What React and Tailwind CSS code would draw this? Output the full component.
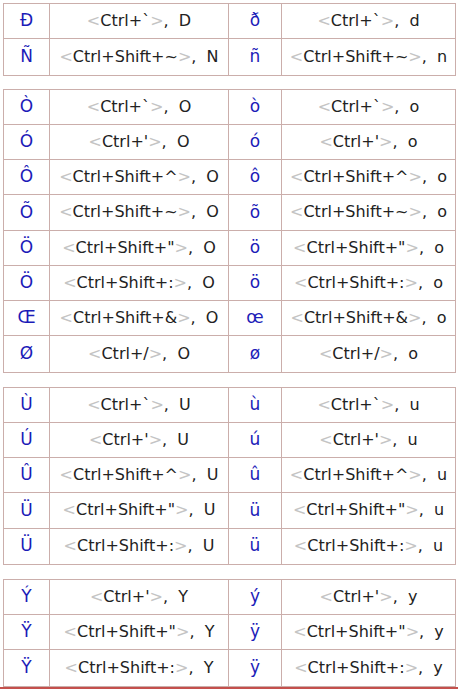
import React from 'react'

const groups = [
	[
		['Đ', '`', 'D', 'ð', '`', 'd'],
		['Ñ', 'Shift+~', 'N', 'ñ', 'Shift+~', 'n'],
	],
	[
		['Ò', '`', 'O', 'ò', '`', 'o'],
		['Ó', "'", 'O', 'ó', "'", 'o'],
		['Ô', 'Shift+^', 'O', 'ô', 'Shift+^', 'o'],
		['Õ', 'Shift+~', 'O', 'õ', 'Shift+~', 'o'],
		['Ö', 'Shift+"', 'O', 'ö', 'Shift+"', 'o'],
		['Ö', 'Shift+:', 'O', 'ö', 'Shift+:', 'o'],
		['Œ', 'Shift+&', 'O', 'œ', 'Shift+&', 'o'],
		['Ø', '/', 'O', 'ø', '/', 'o'],
	],
	[
		['Ù', '`', 'U', 'ù', '`', 'u'],
		['Ú', "'", 'U', 'ú', "'", 'u'],
		['Û', 'Shift+^', 'U', 'û', 'Shift+^', 'u'],
		['Ü', 'Shift+"', 'U', 'ü', 'Shift+"', 'u'],
		['Ü', 'Shift+:', 'U', 'ü', 'Shift+:', 'u'],
	],
	[
		['Ý', "'", 'Y', 'ý', "'", 'y'],
		['Ÿ', 'Shift+"', 'Y', 'ÿ', 'Shift+"', 'y'],
		['Ÿ', 'Shift+:', 'Y', 'ÿ', 'Shift+:', 'y'],
	],
]

const Keys = ({ combo, letter }) => (
	<span className="whitespace-pre">
		<span className="text-[#c4c4c4]">&lt;</span>
		Ctrl+{combo}
		<span className="text-[#c4c4c4]">&gt;</span>,{'  '}
		{letter}
	</span>
)

const Row = ({ row, last }) => {
	const [a, ka, la, b, kb, lb] = row
	const line = last ? '' : 'border-b border-[#cbaeab]'
	return (
		<div className={`grid grid-cols-[46px_179px_53px_1fr] h-[35.25px] ${line}`}>
			<div className="flex items-center justify-center border-r border-[#cbaeab] text-[#1c1cb8] text-[17px]">
				{a}
			</div>
			<div className="flex items-center justify-center border-r border-[#cbaeab] text-[#222]">
				<Keys combo={ka} letter={la} />
			</div>
			<div className="flex items-center justify-center border-r border-[#cbaeab] text-[#1c1cb8] text-[17px]">
				{b}
			</div>
			<div className="flex items-center justify-center text-[#222]">
				<Keys combo={kb} letter={lb} />
			</div>
		</div>
	)
}

export default function App() {
	return (
		<div className="w-[458px] h-[689px] bg-white overflow-hidden pt-[3px] pl-[3px] font-['DejaVu_Sans',sans-serif] text-[16px]">
			<div className="flex flex-col w-[453px]">
				{groups.map((g, i) => (
					<div
						key={i}
						className={`border border-[#cbaeab] ${i === 0 ? '' : i === 1 ? 'mt-[13px]' : 'mt-[14px]'}`}
					>
						{g.map((row, j) => (
							<Row key={j} row={row} last={j === g.length - 1} />
						))}
					</div>
				))}
			</div>
			<div className="-ml-[3px] h-[4px] bg-[#c4504c]" />
		</div>
	)
}
